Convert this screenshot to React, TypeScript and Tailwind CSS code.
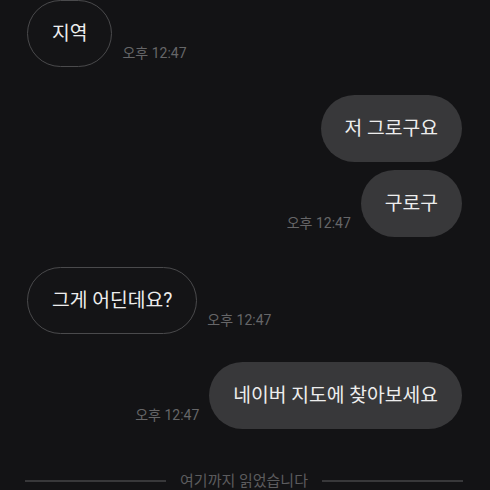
import React from "react";

const font = { fontFamily: 'Roboto, "Noto Sans CJK KR", sans-serif' };

function Time() {
  return (
    <span className="text-[14px] leading-[16px] text-[#666668] whitespace-nowrap mb-[6px]">
      오후 12:47
    </span>
  );
}

function Incoming({ text, time }: { text: string; time?: boolean }) {
  return (
    <div className="flex items-end gap-[10px] pl-[27px]">
      <div className="rounded-full border border-[#4a4a4c] bg-[#141416] px-[24px] py-[19px] text-[19.3px] leading-[27px] text-[#ededed] whitespace-nowrap">
        {text}
      </div>
      {time && <Time />}
    </div>
  );
}

function Outgoing({ text, time }: { text: string; time?: boolean }) {
  return (
    <div className="flex items-end justify-end gap-[10px] pr-[28px]">
      {time && <Time />}
      <div className="rounded-full bg-[#38383a] px-[24px] py-[20px] text-[19.3px] leading-[27px] text-[#ededed] whitespace-nowrap">
        {text}
      </div>
    </div>
  );
}

export default function App() {
  return (
    <div className="w-[490px] h-[490px] overflow-hidden bg-[#131315] flex flex-col" style={font}>
      <div className="mt-0">
        <Incoming text="지역" time />
      </div>
      <div className="mt-[28px]">
        <Outgoing text="저 그로구요" />
      </div>
      <div className="mt-[8px]">
        <Outgoing text="구로구" time />
      </div>
      <div className="mt-[30px]">
        <Incoming text="그게 어딘데요?" time />
      </div>
      <div className="mt-[28px]">
        <Outgoing text="네이버 지도에 찾아보세요" time />
      </div>
      <div className="mt-[42px] flex items-center pl-[25px] pr-[27px] gap-[14px]">
        <div className="flex-1 h-[2px] bg-[#38383a]" />
        <span className="text-[15px] leading-[20px] text-[#5c5c5e] whitespace-nowrap">여기까지 읽었습니다</span>
        <div className="flex-1 h-[2px] bg-[#38383a]" />
      </div>
    </div>
  );
}
